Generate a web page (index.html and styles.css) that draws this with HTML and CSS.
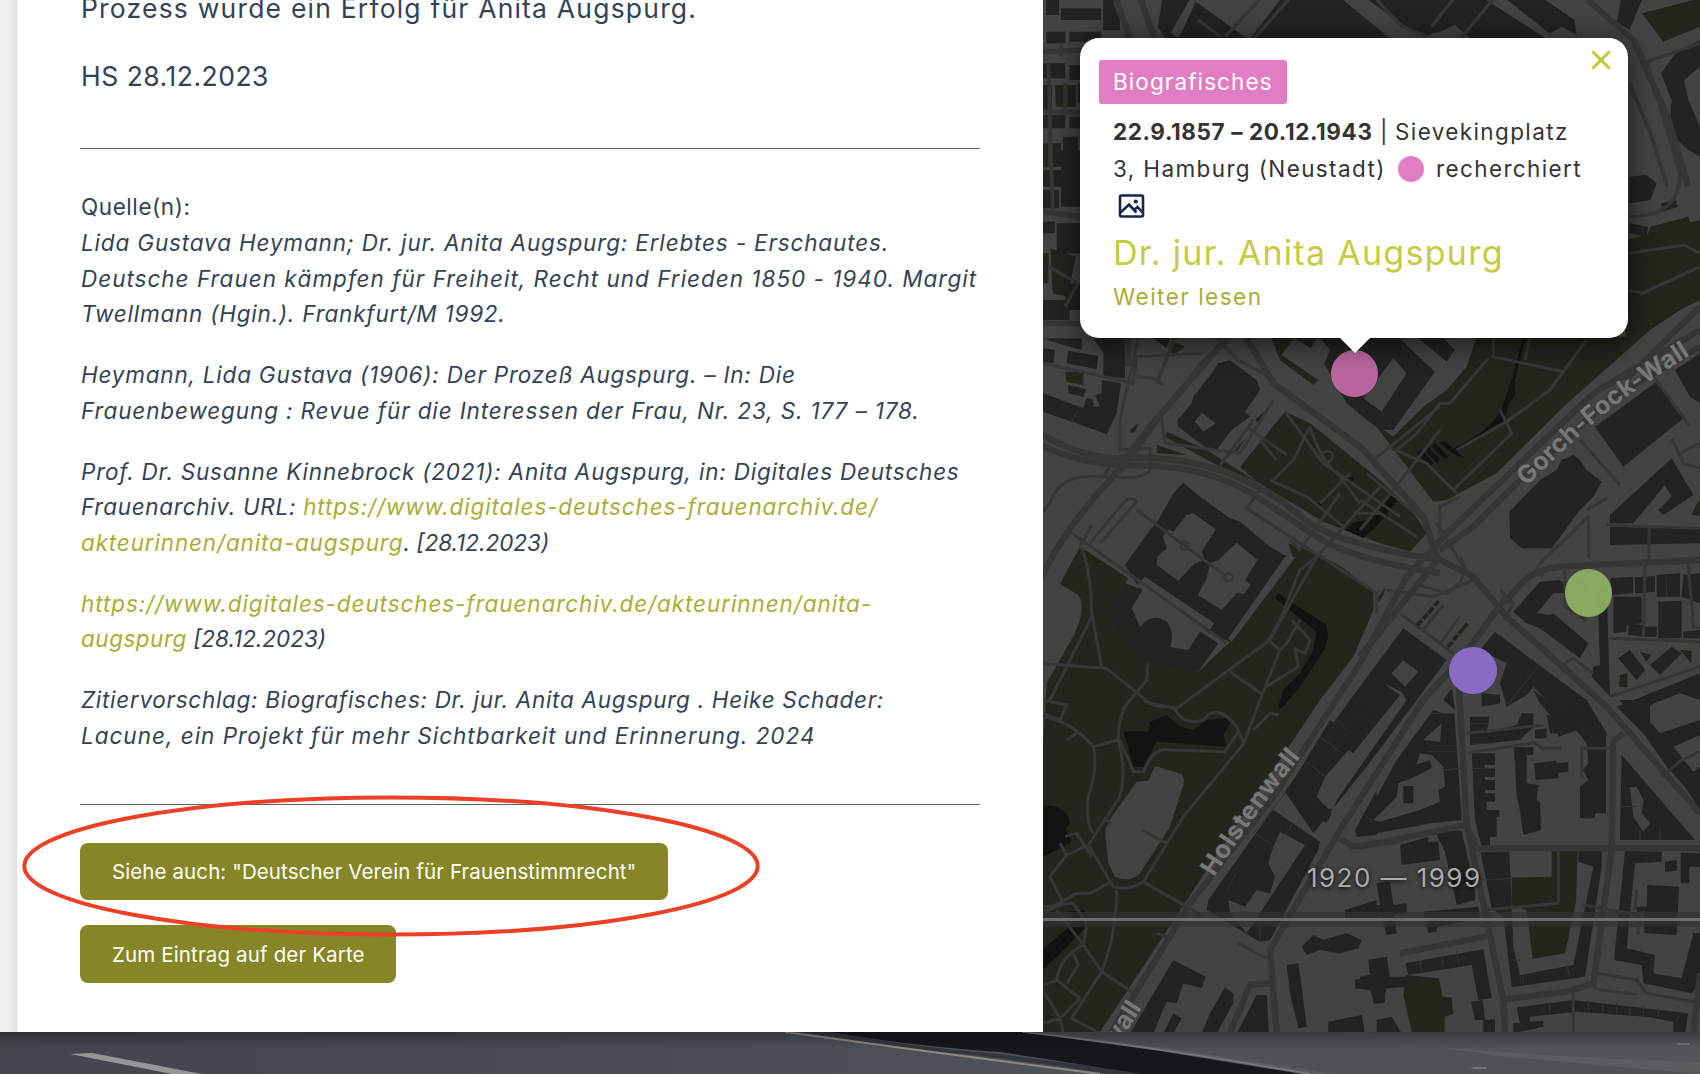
FILE: index.html
```html
<!DOCTYPE html>
<html lang="de">
<head>
<meta charset="utf-8">
<title>Dr. jur. Anita Augspurg</title>
<link rel="stylesheet" href="styles.css">
</head>
<body>
<div class="page">
  <main class="split">
    <div class="gutter"></div>
    <article class="entry">
      <p class="lead"><span class="line t120">Prozess wurde ein Erfolg für Anita Augspurg.</span></p>
      <p class="lead"><span class="line t50">HS 28.12.2023</span></p>
      <hr>
      <section class="sources">
        <div>
          <span class="line t57">Quelle(n):</span>
          <em class="line t84">Lida Gustava Heymann; Dr. jur. Anita Augspurg: Erlebtes - Erschautes.</em>
          <em class="line t100">Deutsche Frauen kämpfen für Freiheit, Recht und Frieden 1850 - 1940. Margit</em>
          <em class="line t78">Twellmann (Hgin.). Frankfurt/M 1992.</em>
        </div>
        <p>
          <em class="line t78">Heymann, Lida Gustava (1906): Der Prozeß Augspurg. – In: Die</em>
          <em class="line t87">Frauenbewegung : Revue für die Interessen der Frau, Nr. 23, S. 177 – 178.</em>
        </p>
        <p>
          <em class="line t78">Prof. Dr. Susanne Kinnebrock (2021): Anita Augspurg, in: Digitales Deutsches</em>
          <em class="line t70">Frauenarchiv. URL: <a class="t87">https://www.digitales-deutsches-frauenarchiv.de/</a></em>
          <em class="line"><a class="t84">akteurinnen/anita-augspurg</a>. [28.12.2023)</em>
        </p>
        <p>
          <em class="line t90"><a>https://www.digitales-deutsches-frauenarchiv.de/akteurinnen/anita-</a></em>
          <em class="line"><a class="t50">augspurg</a> [28.12.2023)</em>
        </p>
        <p>
          <em class="line t70">Zitiervorschlag: Biografisches: Dr. jur. Anita Augspurg . Heike Schader:</em>
          <em class="line t100">Lacune, ein Projekt für mehr Sichtbarkeit und Erinnerung. 2024</em>
        </p>
      </section>
      <hr class="second">
      <div class="actions">
        <a class="button">Siehe auch: "Deutscher Verein für Frauenstimmrecht"</a>
        <a class="button small">Zum Eintrag auf der Karte</a>
      </div>
      <svg class="mark" viewBox="0 0 738 142"><ellipse cx="369" cy="71" rx="366.7" ry="68.6"/></svg>
    </article>

    <section class="map">
      <svg class="tiles" viewBox="9 -990 1971 3096" preserveAspectRatio="none">
        <!-- parks -->
        <g class="park">
          <path d="M120 650L265 745L205 835Q230 900 300 965Q380 1010 475 1025L570 935L760 685L745 640L825 670L905 710L1000 785L1000 840L940 980L840 1110L500 1620L180 2106H0V1400L20 1060L105 910Q140 830 115 795L60 762Z"/>
          <path d="M600 410L735 245L810 280L1020 450L1115 540L1160 610L1110 665L1020 640L850 575L650 455Z"/>
          <path d="M350 345L440 375L350 370ZM380 305L500 360L650 455L520 400L375 320Z"/>
          <path d="M920 225L1010 290L1180 515L1220 510L1370 430L1570 230L1830 0L1980 -100V-330L1760 -270V20H1310L1280 110L1220 180L1150 230L1060 320Z"/>
          <path d="M695 25H760L725 75L835 150L820 165L720 90ZM75 125H130V165L80 155ZM1955 555Q1970 515 1980 512V558ZM1010 810L1036 770L1030 795L1012 820Z"/>
          <path d="M270 300L295 280L285 305L272 310ZM645 270L690 230L655 280ZM585 360L620 320L590 365ZM340 25L380 55L390 25ZM400 35L435 50L400 75L390 60Z"/>
          <path d="M1415 1643L1535 1640V1562H1613L1608 1715L1575 1870L1478 1886L1460 1740L1415 1725ZM1097 1935L1197 1945L1208 2000L1235 2003L1240 2052L1214 2060V2106H1115L1090 1995Z"/>
          <path d="M1800 965L1835 975L1820 995ZM1920 960L1955 962L1953 1000ZM1740 1035L1762 1030V1072L1738 1070Z"/>
        </g>
        <g class="park" transform="translate(0 -990) scale(1.263 1)">
          <path d="M1430 40L1568 -5V80L1480 125ZM35 255H85V320H38ZM25 745L85 770L65 890L30 880ZM5 430H20V500H5ZM1400 870L1450 680L1540 650L1568 740V900L1390 1010Z"/>
        </g>
        <!-- water -->
        <g class="water">
          <path d="M915 600L945 575L985 570L1060 490L1075 510L1005 595L985 610L970 625ZM1130 370L1145 358L1180 400L1170 408ZM1152 358L1165 350L1202 390L1190 400ZM1172 348L1187 340L1225 380L1212 388ZM1200 340L1212 332L1275 385L1245 375Z"/>
          <path d="M1235 358Q1340 310 1382 245L1415 150L1448 25L1456 28L1425 150L1425 195L1405 225L1395 270L1330 310L1250 368Z"/>
          <path d="M715 790L860 885L865 920L850 965L780 1070L725 1135L715 1130L730 1080L780 1030L820 960L830 905L705 805ZM925 443L940 440L940 460L922 460ZM832 520L855 515L840 530Z"/>
          <path d="M252 1205L325 1205L330 1175L380 1155L420 1190L460 1200L500 1170L560 1165L570 1180L550 1215L560 1250L350 1235L310 1310L280 1310Z"/>
          <path d="M0 1430Q60 1415 85 1460L90 1480L75 1500L95 1535L70 1550L0 1585ZM0 1865L100 1780L85 1745L130 1740L155 1770L110 1820L10 1920Z"/>
        </g>
        <path class="land" d="M325 1352L345 1308L425 1332Q435 1345 430 1365L390 1490L300 1630Q270 1660 225 1640L205 1600L195 1500L215 1460L290 1355Z"/>

        <!-- buildings of the northern quarter -->
        <g class="house" transform="translate(0 -990) scale(1.263 1)">
          <path d="M15 0H45V45H15ZM50 25H145V60H50ZM150 0H190V90H150ZM15 95H60V130H15ZM70 95H145V125H70ZM5 190H60V235H5ZM70 195H120V240H70ZM130 180H195V235H130ZM5 255H28V330H5ZM90 250H120V310H90ZM125 250H190V330H125ZM5 345H60V385H5ZM70 350H110V385H70ZM115 370H180V440H115ZM25 430H50V500H25ZM55 410H90V460H55ZM5 510H50V560H5ZM50 450H95V620H50ZM5 570H45V625H5ZM5 665H35V700H5ZM40 670H95V760H40ZM5 760H20V850H5ZM60 850H95V930H60ZM5 900H70V960H5Z"/>
          <path d="M290 0H355L310 100L340 120H300L280 80ZM370 5L490 114H330ZM570 0L500 114H830L720 0ZM780 0L870 80L910 110L960 90L985 75L1020 114H1200L1060 0ZM1110 0L1210 100L1240 80L1275 105L1270 60L1200 0ZM1380 0H1430L1400 90L1370 65ZM1568 120L1510 160L1475 220L1500 300L1495 400L1540 450L1568 470V380L1540 300L1530 240L1568 200Z"/>
          <path d="M1400 530L1440 525L1465 550L1450 600L1400 610ZM1475 610L1510 600L1515 620L1480 635ZM1400 670L1445 680L1440 710L1400 700Z"/>
        </g>
        <!-- buildings -->
        <g class="house">
          <path d="M160 25H255V145L190 140V70ZM85 62L175 78L170 118L80 100ZM9 55L45 60L40 100L9 95ZM9 25H125V60L70 45ZM185 150L243 160L230 250L200 312L9 245V190L130 235L140 205L160 210V230H180L165 195L185 190ZM85 165L138 178L130 200L85 190Z"/>
          <path d="M570 90L650 150L660 180L615 245L630 260L575 300L530 360L495 350L415 290L412 270L455 220L460 200L515 130L535 100Z"/>
          <path d="M430 458L480 500L570 565L600 575L690 650L750 685L660 820L570 935L500 905L475 915L445 960L390 950L310 895L275 835L305 785L255 705L330 600L355 570L400 490Z"/>
          <path d="M255 760L205 835Q230 920 310 985Q380 1015 475 1025L535 940L480 905L445 960L390 950Q400 900 375 870Q330 850 300 890L275 835L310 780Z"/>
          <path d="M765 25L835 70L920 220L1020 300L1060 300L1185 125L1115 60L1080 25ZM1135 25H1210L1245 60L1220 95Z"/>
          <path d="M1665 290L1850 155L1930 265L1750 410ZM1600 375L1620 390L1640 420L1685 455L1660 500L1620 540L1535 655L1445 655L1410 625L1408 545L1500 450L1550 420L1565 390ZM1710 555L1895 385L1960 495L1870 555L1855 540L1895 500L1875 465L1780 580H1710ZM1710 590L1980 595V640L1710 645ZM1905 120L1980 70V220L1950 200Z"/>
          <path d="M1420 845L1500 755L1560 750L1575 765L1640 745V785L1540 790L1490 850L1530 855L1540 850L1645 940L1620 985L1500 895L1460 880ZM1672 770L1700 765L1710 1100L1655 1040L1660 1010L1680 1005Z"/>
          <path d="M1712 745L1780 740V790L1715 795ZM1785 742L1845 738V785L1785 790ZM1720 800L1805 800V880L1760 885V905L1720 910ZM1765 880L1810 885V920L1765 915ZM1850 735L1920 730V800L1850 800ZM1855 815L1925 812V925L1855 925ZM1930 735L1980 730V820L1925 800ZM1815 890H1850V920H1815ZM1930 905L1980 900V925H1930Z"/>
          <path d="M1735 985L1770 960L1815 1020L1790 1050ZM1830 1005L1895 950L1925 970L1860 1035ZM1730 1130L1980 1030V1440L1870 1270Z"/>
          <path fill-rule="evenodd" d="M1090 895L1220 990L980 1310L820 1510L735 1385L850 1220L930 1110ZM1090 990L1135 1025L1095 1070L1055 1030ZM1030 1060L1080 1095L830 1405L870 1440L1100 1110L1085 1085Z"/>
          <path d="M1365 905L1530 1030L1640 1110L1700 1210L1695 1245L1640 1190L1555 1220L1535 1160L1500 1120L1480 1080L1520 1110L1480 1070L1460 1095L1400 1130L1380 1060L1400 1000L1370 985L1320 960ZM1235 1075L1245 1140L1210 1110ZM1325 1090L1380 1095V1120L1325 1130Z"/>
        </g>
        <g class="house" transform="translate(0 1110)">
          <path d="M930 5L995 40L960 90L910 60ZM870 60L940 110L920 140L830 290L875 340L860 370L740 275ZM700 330L840 425L835 450L690 720L660 725L500 630L505 600L690 340Z"/>
          <path class="lot" d="M720 395L795 435L620 700L570 640L565 600L615 620L650 570L690 580L705 530L685 490L700 440Z"/>
          <path d="M1010 270V405L950 410L945 390ZM915 630L1010 600V650L915 660ZM785 740L820 705L850 720L880 710L920 700L965 720L955 745L900 760L870 755L840 750L800 765ZM740 795L775 790L785 860L800 980L775 985L750 880ZM945 840L990 825L985 780L1040 770L1050 830L1110 830V860L1040 865L1030 910L1000 910V870L945 865ZM865 965L965 945L975 1000H865ZM400 780L497 830L485 865L430 850L410 910L380 905L340 1000H270ZM555 862L580 880V910L530 1000H485L510 940ZM400 940L425 955L400 1000H370ZM650 885H680L687 1000H590Z"/>
          <path class="land" d="M855 230L925 150L940 160L880 330L830 290Z"/>
        </g>
        <g class="house" transform="translate(960 1110)">
          <path d="M220 30L250 40H283L305 360L210 370L185 375L50 400L10 405L0 380L50 290L110 180Z"/>
          <path class="lot" d="M245 70L240 125L190 120ZM180 160L215 165L250 200L255 260L235 270L240 305L180 330L60 365L40 360L110 290L115 250L155 235Z"/>
          <path d="M130 258H160V310H130ZM150 200L210 180L215 205L155 235Z"/>
          <path d="M330 50H388L380 100L470 75L485 40H520V80L480 120L330 135ZM335 160H405V195H375V205H405V230H375V240H405V270H375V280H405V305H380V330H418V350H410V410H390V440H365L345 360ZM462 142H520V165H500V250L535 255L530 300L540 310L543 390L490 405L478 320L470 290ZM522 190L590 182V190L625 185V215L595 218V235L527 240ZM525 90L560 85V115H525ZM560 45L588 48L590 100H570ZM640 30L738 105V340H705V355H660V260L685 240L668 210L685 190L680 130L640 80L600 110L590 90ZM785 165L1005 420H780ZM780 0L920 200L1020 310V0Z"/>
          <path class="lot" d="M810 262L830 260L850 300L845 340L870 370L850 395L820 350ZM870 15L960 -20L1020 0V60L900 100L870 65ZM940 140L1020 105V200L1000 215Z"/>
          <path d="M120 435L205 410V425H235L240 480L125 495ZM225 395L305 392L345 570V600L290 615L255 455ZM50 550L90 545L100 615L140 610V640L100 645L110 700L80 705L65 650L0 660V620L60 615ZM190 635L355 620L360 655L230 680V695L205 698ZM28 780L58 775L65 830L108 835V855L75 860V905L45 912L30 870L0 865V830L30 825ZM135 790L370 748L395 895L355 900L335 795L145 825ZM333 905L368 900L375 960H345ZM370 960L405 958V1000H370ZM50 960L95 950L125 1000H50Z"/>
          <path d="M362 457L448 455L460 740L480 825L640 795L700 500L655 485V452H725V500L675 830L455 862L430 650L395 625ZM795 452L905 455V485L825 490L800 745L885 765L880 820L965 835L1000 700H1020V850L995 880L850 850L845 795L762 780ZM915 485L950 480V512L915 515ZM962 458L1020 460V500H988V550H962ZM862 555L957 560L950 705L853 700V635H830V620H860ZM470 922L640 900L985 940L975 1000H940V965L860 950L650 935L510 950V965L550 962V980L460 1000V970H480Z"/>
        </g>

        <!-- courtyards of the court buildings -->
        <g class="land">
          <path d="M485 248L527 280L490 305L465 275ZM460 550L527 598L485 665L495 690L465 700L415 752L350 705L352 680L380 655L368 620L385 598L400 605L440 555ZM590 638L653 690L615 750L632 765L612 792L590 790L545 840L473 795L500 745L510 700L535 690Z"/>
          <path d="M315 740L523 880L500 915L480 905L445 960L390 950Q405 905 380 875Q335 845 302 890L275 835L307 780L290 765ZM830 25L805 65L850 108L870 60L840 25ZM1060 85L1100 130L1025 245L970 205ZM735 680L768 680L575 935L565 925Z"/>
        </g>

        <!-- streets -->
        <g class="road xl">
          <path d="M0 310Q120 380 230 385Q400 375 540 420Q700 480 800 575Q920 650 1200 690L1300 740L1400 860L1700 1130L1980 1450"/>
          <path d="M0 345Q130 405 260 405L370 410Q520 420 650 500L830 620Q940 690 1200 730M0 750Q70 600 210 450L330 290L560 25M620 25L700 160L960 350L1150 560L1190 680"/>
          <path d="M1980 0L1660 190L1220 610L1100 740L960 1000L700 1400L450 1720L215 2106M1200 660L1300 590L1440 450L1720 200L1980 50"/>
          <path d="M1200 680L960 980M1400 800L1260 990L1150 1110L900 1500L690 1860L710 2106M1255 1040L1280 1480L1390 2010L1395 2106M1400 820Q1450 720 1560 710L1980 690M960 1550L1280 1485L1310 1555H1980M1720 1230L1715 1560L1660 1960L1580 1985L1380 2010M1720 1235L1750 1210M900 1525L940 1550L1090 1530M570 2106L630 1965L690 1960M1080 1870L1345 1818M1980 1930L1960 2106"/>
        </g>
        <g class="road">
          <path d="M295 25L240 270V360L330 355L330 420Q310 450 230 440L130 440Q50 450 30 520L9 545M9 100L280 160L290 80L490 70M290 140L340 145L370 165M360 240L375 340L600 370L700 210M180 640L290 515Q270 490 240 530L150 640M90 605L560 940M290 540L560 740M120 650L155 585M120 640Q155 730 155 850L185 1010M0 1000L200 1015L330 1120L410 1135L690 930L830 680L1020 470M190 440L215 400M620 290L740 375M660 330L710 390M735 245L850 400L1080 560M810 290L760 390L700 450M810 290Q840 390 900 440L960 520M930 430L840 520M690 450L800 500L910 590M660 480L620 535L1010 790V850M940 550H1020M750 630L780 660L900 490M530 420L640 270M1190 580L1290 740M240 430L480 100L570 25"/>
          <path d="M830 680L780 720L720 870L685 930L720 960L660 1110M780 870L740 940L720 960M755 870L810 930L795 970L765 955L775 1010L680 1070M570 1025L670 1095M325 1000L320 1050L245 1140M155 860L30 1110"/>
          <path d="M1360 25V80L1570 125M1640 30L1570 125L1530 180L1400 275L1250 360M1345 85L1230 220L1200 220L1130 310L1070 360M1455 90L1470 25M1380 240L1415 310L1240 480M1040 350L1160 400L1250 490M1000 390L1200 230M1200 610V530L1260 500M960 600L1060 480L1200 300M980 430L1150 570M960 510L1130 620M1840 140L1950 290M1620 330L1740 465M1700 585L1820 590L1980 595M1827 590V690M1645 680V560L1500 700Q1480 720 1510 740M1640 540L1700 505M1895 325L1930 400L1980 415M1920 370L1980 340M1575 710V830L1640 870M1815 700L1810 920M1710 925L1980 935M1945 700L1960 890L1980 895M1710 1100L1980 1010M1560 1010L1600 985L1660 1030M1040 780L1180 800L1300 750M1080 850L1240 970M1150 900L1210 825M1200 940L1260 860M1260 680Q1300 740 1220 790L1120 760M1380 780L1420 820L1390 870"/>
          <path d="M1280 1210L1510 1185M1280 1270L1485 1238L1505 1255H1565M1625 1340V1255H1720M1865 1340L1925 1290L1980 1265M1330 1740L1555 1720V1555M1630 1725L1795 1755V1815M1670 1930L1790 1950L1820 1990L1960 2015M1660 1970L1680 1980L1790 1993M1600 1990V2106M1790 1680L1785 1740M595 1840L680 1885"/>
        </g>
        <g class="road" transform="translate(0 1110)">
          <path d="M9 50Q90 60 160 140Q175 200 145 290Q135 370 160 400M160 140L235 120Q235 40 270 0M235 120Q260 210 240 290L145 435L80 465L30 530L70 610L9 640M240 120L280 215H310Q340 140 390 150L555 155L595 95M310 0Q350 25 400 20Q430 80 490 60Q530 5 590 80L612 130M660 0L612 130L430 350L310 545Q260 575 220 560L145 435M640 90L690 40L715 45M305 390L380 430M310 545L490 650M230 570Q230 700 185 815L290 885M215 545L150 580H110L9 635M9 620L100 610L140 670L130 735L50 630M130 735L185 815L95 955L180 1000M130 735Q60 770 50 840L120 895L60 955L15 880M100 760L115 795L80 850M9 855L50 840M9 970L60 955L70 1000M80 120L110 100M190 355L215 370M60 430L80 465M75 410L110 400L155 470M9 1L80 15L60 60L9 40M350 700L395 715"/>
        </g>
        <g class="road" transform="translate(0 -990) scale(1.263 1)">
          <path class="wide" d="M180 0L210 100L200 500L210 1100M240 0L270 110M5 155L120 150M5 335L200 340M5 635L95 650M5 970H100M1300 0L1410 120L1490 350L1540 560M1568 920L1390 1140"/>
          <path d="M520 0L440 110M590 0L510 114M980 0L930 80M1075 0L1000 114M375 60L430 110M1430 190L1568 130M1440 180L1520 520Q1520 650 1400 650M1400 250L1450 400L1490 560M1400 870L1430 880L1568 800M1400 760L1530 735L1568 760M800 0L860 80L920 110"/>
          <path d="M320 1014L280 1140M420 1014L470 1080L560 1140M50 130V170M20 190L30 640M60 250V340M20 800L90 850L60 920"/>
        </g>
        <g class="plot">
          <path d="M740 1385L640 1510M880 1160L920 1200M840 1220L905 1270M790 1290L855 1340M645 1510L690 1540M760 1480L725 1530M590 1630L560 1680M660 1760V1830M1170 1150L1240 1150M1160 1265H1250M1210 1320L1260 1315M1290 1180H1345M1295 1240H1365M1300 1315H1365M1740 1430H1790M1800 1500V1530M1860 1490V1530M1140 1890L1145 1930M1205 1875L1210 1910M1250 1860L1255 1900M1320 1650L1415 1645M1410 1890L1440 1890M1450 1940V1970M1580 1905L1590 1940M1645 2010V2045M1690 2015V2045M1730 2015V2050M1770 2020V2055M1810 2025V2060M1855 2030V2065M1530 2015V2045M1000 1480L960 1440M1500 1000L1400 1130M1810 740V790M1880 740V800M115 240L90 280"/>
        </g>
        <circle class="ring" cx="433" cy="647" r="12"/><circle class="ring" cx="566" cy="742" r="12"/><circle class="ring" cx="862" cy="379" r="16"/>
        <path class="trees" d="M1132 885L1146 870M1149 866L1163 851M1166 848L1180 833M1182 828L1196 813M1224 950L1238 935M1240 930L1254 915M1256 911L1270 896M1270 895L1282 880"/>

        <path id="gorch" fill="none" d="M1460 470Q1640 288 1760 201Q1860 131 1990 51"/>
        <text class="street"><textPath href="#gorch" textLength="632">Gorch-Fock-Wall</textPath></text>
        <path id="holsten" fill="none" d="M522 1642Q650 1442 790 1270"/>
        <text class="street"><textPath href="#holsten" textLength="445">Holstenwall</textPath></text>
        <text class="street" transform="translate(72 2394) rotate(-57)" textLength="430">Holstenwall</text>
      </svg>
      <span class="pin pink"></span>
      <span class="pin green"></span>
      <span class="pin violet"></span>
      <div class="track"></div>
      <div class="years">1920 — 1999</div>

      <div class="popup">
        <span class="badge">Biografisches</span>
        <svg class="close" viewBox="0 0 20 20"><path d="M1.5 1.5L18.5 18.5M18.5 1.5L1.5 18.5"/></svg>
        <div class="meta">
          <div class="row"><b>22.9.1857 – 20.12.1943</b><span class="bar">|</span><span>Sievekingplatz</span></div>
          <div class="row"><span class="place">3, Hamburg (Neustadt)</span><i class="dot"></i><span>recherchiert</span></div>
          <div class="row">
            <svg class="image" viewBox="0 0 26 24"><rect x="1.5" y="1.5" width="23" height="21" rx="1.5"/><path d="M2 18.5L10.5 10.5L18 18.5M15.8 15.8L19 13L24 18.5"/><circle cx="17.3" cy="7.5" r="2.1"/></svg>
          </div>
        </div>
        <h2>Dr. jur. Anita Augspurg</h2>
        <a class="more">Weiter lesen</a>
        <span class="tip"></span>
      </div>
    </section>
  </main>
  <footer class="photo">
    <svg viewBox="0 0 1700 42" preserveAspectRatio="none">
      <defs>
        <linearGradient id="asphalt"><stop offset="0" stop-color="#44464d"/><stop offset=".25" stop-color="#474a53"/><stop offset=".5" stop-color="#4d5058"/><stop offset="1" stop-color="#54555a"/></linearGradient>
        <linearGradient id="shade" x2="0" y2="1"><stop offset="0" stop-color="#000" stop-opacity=".28"/><stop offset=".4" stop-color="#000" stop-opacity="0"/></linearGradient>
      </defs>
      <path fill="url(#asphalt)" d="M0 0H1700V42H0Z"/>
      <path fill="#5b5c60" d="M1010 0H1320Q1450 22 1700 30V42H1300Q1160 16 1010 0Z"/>
      <path fill="#505157" d="M1040 0H1340L1500 24L1700 42H1330Q1190 18 1040 0Z"/>
      <path fill="#34363e" d="M800 0H840Q900 14 1000 22L1150 42H1110Q980 22 925 19Z"/>
      <path fill="#17181e" d="M832 0H1022L1160 19L1302 42H1142Q1040 26 1000 20Q910 14 832 0Z"/>
      <path class="curb" d="M1022 0Q1150 14 1310 42"/>
      <path class="lane" d="M785 0Q860 10 925 19L1100 42"/>
      <path fill="#96979b" d="M70 22L92 21L202 42H172Z"/>
      <path fill="#717277" d="M1676 11H1690V13H1678ZM1470 35H1486V37H1474Z"/>
      <path fill="url(#shade)" d="M0 0H1700V42H0Z"/>
    </svg>
  </footer>
</div>
</body>
</html>
```
FILE: styles.css
```css
* { box-sizing: border-box; }

body {
  margin: 0;
  font-family: Inter, "Liberation Sans", sans-serif;
  font-size: 22.5px;
  line-height: 35.7px;
  color: #334155;
  background: #fff;
}

p, h2 { margin: 0; }

.page {
  display: flex;
  flex-direction: column;
  width: 1700px;
  height: 1074px;
  overflow: hidden;
}

.split {
  display: grid;
  grid-template-columns: 17px 1026px 657px;
  height: 1032px;
}

.gutter { background: linear-gradient(90deg, #f0efed 0 55%, #dfdedc); }

/* Article column */
.entry {
  position: relative;
  display: flex;
  flex-direction: column;
  padding: 0 63px;
  min-width: 0;
  height: 1032px;
}

.line { display: block; white-space: nowrap; padding-left: 1px; }
.lead { font-size: 26.5px; line-height: 43px; }
.lead:first-child { margin: -13.3px 0 25px; }

.t50 { letter-spacing: .5px; }
.t57 { letter-spacing: .57px; }
.t70 { letter-spacing: .7px; }
.t78 { letter-spacing: .78px; }
.t84 { letter-spacing: .84px; }
.t87 { letter-spacing: .87px; }
.t90 { letter-spacing: .9px; }
.t100 { letter-spacing: .99px; }
.t120 { letter-spacing: 1.2px; }

hr {
  width: 900px;
  height: 1px;
  margin: 50.3px 0 40.3px;
  border: 0;
  background: #626265;
}

hr.second { margin: 50.6px 0 38px; }

.sources { display: flex; flex-direction: column; gap: 25px; }
.sources a { color: #a9ac35; }

.actions {
  display: flex;
  flex-direction: column;
  align-items: flex-start;
  gap: 25px;
}

.button {
  width: 588px;
  padding-left: 32px;
  border-radius: 8px;
  background: #868626;
  color: #fff;
  font-size: 20.5px;
  line-height: 57px;
  letter-spacing: .1px;
  white-space: nowrap;
}

.button.small { width: 316px; height: 58px; line-height: 59px; letter-spacing: .14px; }

.mark {
  position: absolute;
  left: 5px;
  top: 795px;
  width: 738px;
  height: 142px;
  fill: none;
  stroke: #eb4025;
  stroke-width: 4;
}

/* Map */
.map { position: relative; overflow: hidden; background: #434343; }
.tiles { display: block; width: 657px; height: 1032px; }
.park { fill: #24251d; }
.water { fill: #131313; }
.land, .lot { fill: #434343; }
.house { fill: #232321; }
.road { fill: none; stroke: #363636; stroke-width: 9; stroke-linejoin: round; }
.road.xl { stroke-width: 19; }
.road .wide { stroke-width: 16; }
.plot { fill: none; stroke: #343433; stroke-width: 3; }
.ring { fill: none; stroke: #363636; stroke-width: 8; }
.trees { stroke: #24251d; stroke-width: 11; }

.street {
  fill: #787878;
  stroke: #3d3d3d;
  stroke-width: 4;
  paint-order: stroke;
  font-size: 75px;
  font-weight: 700;
}

.pin {
  position: absolute;
  width: 47px;
  height: 47px;
  border-radius: 50%;
  opacity: .93;
}

.pink { left: 288px; top: 350px; background: #c56ca9; }
.green { left: 522px; top: 569px; width: 47px; height: 48px; background: #91b266; }
.violet { left: 406px; top: 647px; width: 48px; background: #8f6fd1; }

.track {
  position: absolute;
  inset: 912px 0 auto;
  height: 15px;
  border: solid rgba(50, 50, 50, .7);
  border-width: 6px 0;
  background: #6d6d6d padding-box;
}

.years {
  position: absolute;
  left: 264px;
  top: 858px;
  font-size: 26px;
  line-height: 40px;
  letter-spacing: 1.45px;
  color: #aaa;
  text-shadow: 0 1px 4px #000;
  white-space: nowrap;
}

/* Popup over the map */
.popup {
  position: absolute;
  left: 37px;
  top: 38px;
  width: 548px;
  height: 300px;
  padding: 22px 19px;
  border-radius: 19px;
  background: #fff;
  color: #333;
  box-shadow: 0 4px 28px rgba(0, 0, 0, .65);
}

.badge {
  display: block;
  width: 188px;
  padding-left: 14px;
  border-radius: 3px;
  background: #e17dc2;
  color: #fff;
  line-height: 44px;
  letter-spacing: 1.1px;
}

.close {
  position: absolute;
  right: 17px;
  top: 12px;
  width: 20px;
  height: 20px;
  fill: none;
  stroke: #c4c634;
  stroke-width: 3;
}

.meta { padding: 9.3px 0 0 14px; line-height: 37px; letter-spacing: 1.38px; }
.row { display: flex; align-items: center; height: 37px; white-space: nowrap; }
.row b { width: 267px; letter-spacing: .6px; }
.bar { width: 15px; }
.place { width: 285px; }

.dot {
  width: 26px;
  height: 26px;
  margin-right: 12px;
  border-radius: 50%;
  background: #e17dc2;
}

.image {
  width: 27px;
  height: 24px;
  margin-left: 5px;
  fill: none;
  stroke: #14264b;
  stroke-width: 2.6;
}

.image circle { fill: #14264b; stroke: none; }

h2 {
  margin: 7.7px 0 6px 14px;
  color: #c8ca41;
  font-size: 34px;
  font-weight: 400;
  line-height: 41px;
  letter-spacing: 1.3px;
}

.more { margin-left: 14px; color: #a9ac35; letter-spacing: 1.5px; }

.tip {
  position: absolute;
  left: 259px;
  top: 299px;
  width: 32px;
  height: 16px;
  background: #fff;
  clip-path: polygon(0 0, 100% 0, 50% 100%);
}

/* Street photo below the panels */
.photo { height: 42px; }
.photo svg { display: block; width: 1700px; height: 42px; }
.curb { fill: none; stroke: #77787b; stroke-width: 1.5; }
.lane { fill: none; stroke: #8b8980; stroke-width: 2; }
```
